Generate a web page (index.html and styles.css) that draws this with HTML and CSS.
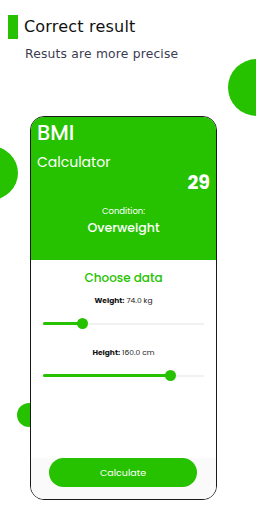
FILE: index.html
```html
<!DOCTYPE html>
<html>
<head>
<meta charset="utf-8">
<link rel="stylesheet" href="styles.css">
</head>
<body>
<div class="screen">
  <div class="circle circle-right"></div>
  <div class="circle circle-left"></div>
  <div class="circle circle-small"></div>
  <header class="intro">
    <div class="title-row">
      <span class="bar"></span>
      <h1 class="title">Correct result</h1>
    </div>
    <p class="subtitle">Resuts are more precise</p>
  </header>
  <div class="phone">
    <section class="result">
      <div class="bmi">BMI</div>
      <div class="calc">Calculator</div>
      <div class="value">29</div>
      <div class="cond-label">Condition:</div>
      <div class="cond-value">Overweight</div>
    </section>
    <section class="data">
      <h2 class="choose">Choose data</h2>
      <div class="field-label first"><b>Weight:</b> 74.0 kg</div>
      <div class="slider"><div class="active" style="width:39px"><span class="thumb"></span></div></div>
      <div class="field-label"><b>Height:</b> 160.0 cm</div>
      <div class="slider"><div class="active" style="width:127px"><span class="thumb"></span></div></div>
    </section>
    <footer class="actions">
      <button class="calc-btn">Calculate</button>
    </footer>
  </div>
</div>
</body>
</html>
```
FILE: styles.css
```css
* { box-sizing: border-box; }
html, body { margin: 0; padding: 0; background: #fff; }
.screen {
  position: relative;
  width: 256px;
  height: 512px;
  overflow: hidden;
  font-family: "Poppins", "Inter", "Noto Sans", sans-serif;
}
.circle {
  position: absolute;
  border-radius: 50%;
  background: #26c200;
  z-index: 0;
}
.circle-right { left: 228px; top: 59px; width: 58px; height: 57px; }
.circle-left { left: -37px; top: 146px; width: 55px; height: 54px; }
.circle-small { left: 17px; top: 403px; width: 24px; height: 24px; }

.intro { position: relative; z-index: 1; padding: 15px 0 0 8px; }
.title-row { display: flex; align-items: center; gap: 6px; }
.bar { width: 10px; height: 24px; background: #26c200; }
.title {
  margin: 0;
  font-family: "DejaVu Sans", sans-serif;
  font-weight: normal;
  font-size: 16px;
  line-height: 24px;
  color: #111;
  letter-spacing: 0.2px;
}
.subtitle {
  margin: 8px 0 0 17px;
  font-family: "DejaVu Sans", sans-serif;
  font-size: 12.3px;
  line-height: 15px;
  color: #3b3b52;
  letter-spacing: 0.2px;
}

.phone {
  position: relative;
  z-index: 1;
  margin: 54px 0 0 30px;
  width: 187px;
  height: 384px;
  border: 1.5px solid #1a1a1a;
  border-radius: 14px;
  overflow: hidden;
  background: #fff;
  display: flex;
  flex-direction: column;
}
.result {
  background: #26c200;
  color: #fff;
  height: 143px;
  padding: 2px 6px 0 6px;
  display: flex;
  flex-direction: column;
}
.bmi { font-size: 21px; font-weight: 500; line-height: 28px; }
.calc { font-size: 14px; line-height: 18px; margin-top: 6px; font-weight: 400; }
.value { font-size: 19px; font-weight: 700; line-height: 22px; text-align: right; margin-top: 1px; }
.cond-label { font-size: 8.5px; line-height: 11px; text-align: center; margin-top: 12px; }
.cond-value { font-size: 12.5px; font-weight: 500; line-height: 16px; text-align: center; margin-top: 3px; }

.data { flex: 1; padding: 0 12px; display: flex; flex-direction: column; }
.choose {
  margin: 10px 0 0 0;
  text-align: center;
  color: #26c200;
  font-size: 12px;
  font-weight: 500;
  line-height: 16px;
}
.field-label {
  text-align: center;
  font-size: 7.5px;
  line-height: 10px;
  color: #222;
  margin-top: 23.5px;
}
.field-label.first { margin-top: 10px; }
.field-label b { font-weight: 700; color: #111; }
.slider {
  margin-top: 16.5px;
  height: 2px;
  background: #f1f1f1;
  position: relative;
}
.active {
  height: 3px;
  margin-top: -0.5px;
  background: #26c200;
  border-radius: 2px;
  position: relative;
}
.thumb {
  position: absolute;
  right: -5.5px;
  top: -4px;
  width: 11px;
  height: 11px;
  border-radius: 50%;
  background: #26c200;
}
.actions {
  background: #fafafa;
  height: 41px;
  padding: 0 18px 0 18px;
}
.calc-btn {
  display: block;
  width: 148px;
  height: 29px;
  border: none;
  border-radius: 15px;
  background: #26c200;
  color: #fff;
  font-family: "Poppins", "Inter", "Noto Sans", sans-serif;
  font-size: 9.5px;
  padding: 0;
}
```
